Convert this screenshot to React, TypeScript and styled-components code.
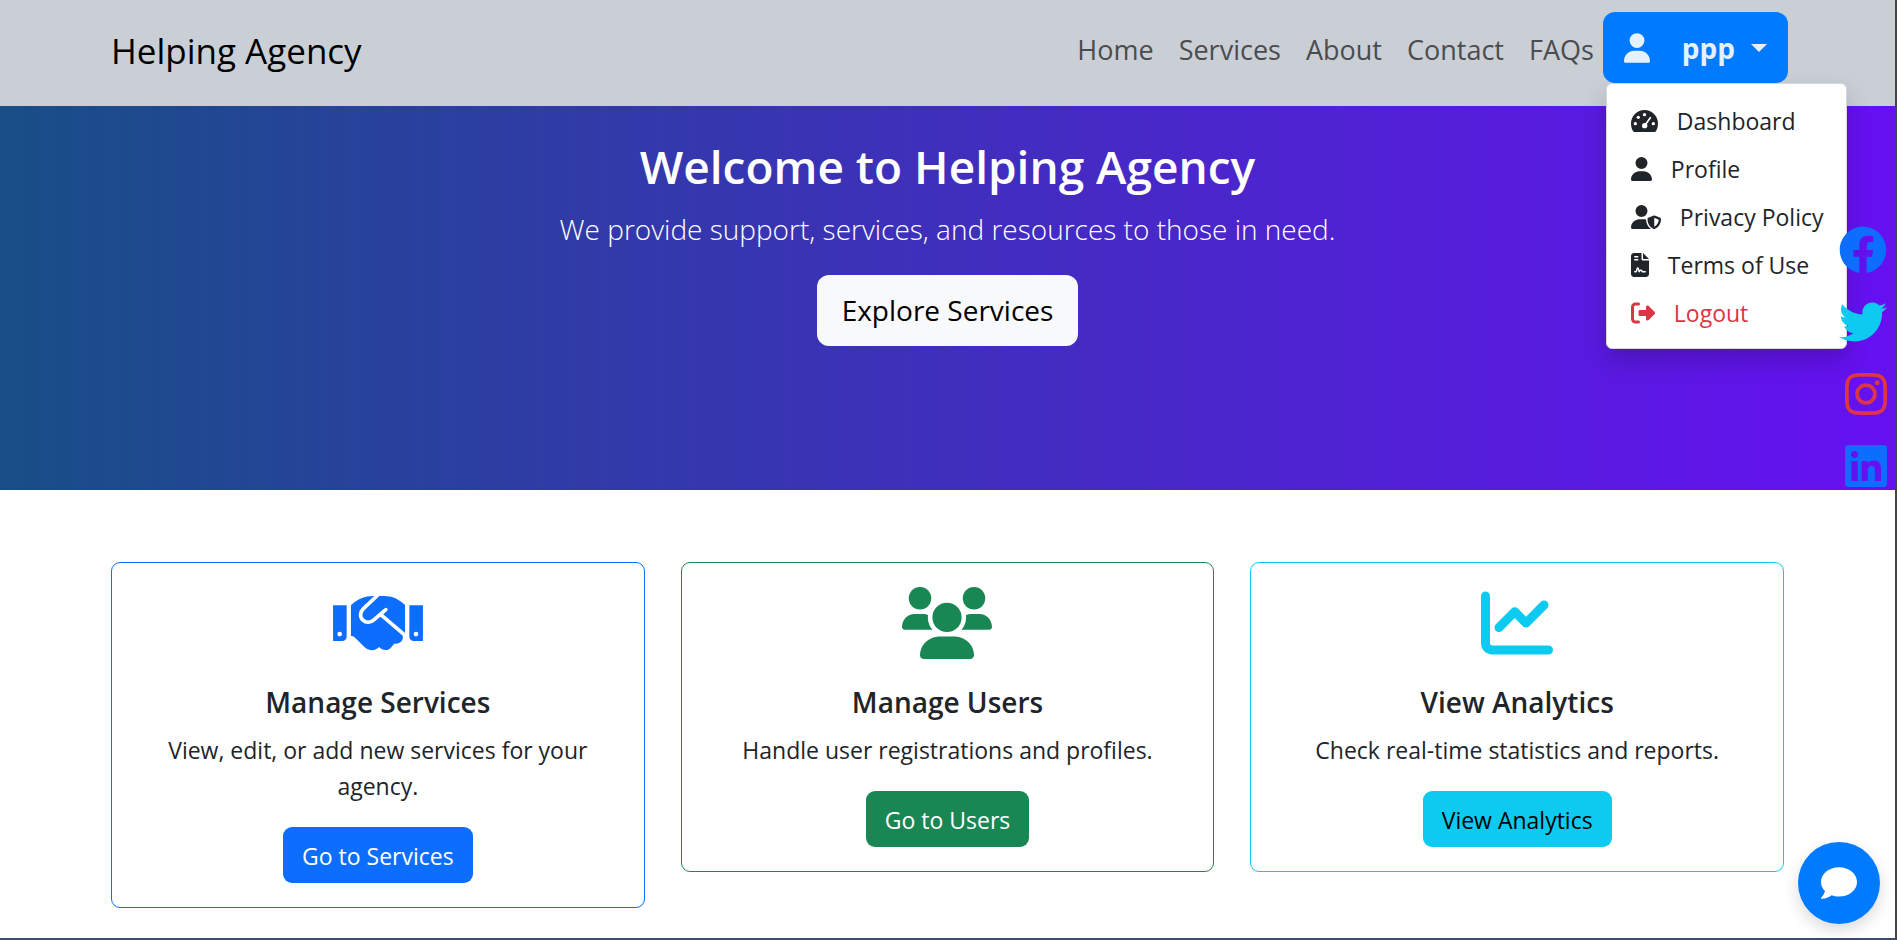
import React from "react";
import styled, { createGlobalStyle } from "styled-components";
import { FaComment, FaFacebook, FaTwitter, FaInstagram, FaLinkedin } from "react-icons/fa";
import {
  FaChartLine,
  FaFileContract,
  FaRightFromBracket,
  FaUser,
  FaUserShield,
} from "react-icons/fa6";

const GlobalStyle = createGlobalStyle`
  *, *::before, *::after { box-sizing: border-box; }
  body {
    margin: 0;
    background: #fff;
    color: #212529;
    font-family: "Open Sans", "Noto Sans", sans-serif;
    font-size: 23px;
    line-height: 36px;
  }
  h1, h2, p, ul { margin: 0; padding: 0; }
  ul { list-style: none; }
  a { color: inherit; text-decoration: none; }
  button { font-family: inherit; cursor: pointer; }
  svg { display: block; flex: none; }
`;

const Page = styled.div`
  position: relative;
  border-right: 2px solid #454545;
  border-bottom: 2px solid #34506f;
`;

const Container = styled.div`
  max-width: 1709px;
  margin: 0 auto;
  padding: 0 18px;
`;

const Header = styled.header`
  background: #cacfd6;
  padding: 12px 0 23px;
`;

const Bar = styled(Container)`
  display: flex;
  align-items: center;
  justify-content: space-between;
  padding-right: 14px;
`;

const Brand = styled.a`
  padding-top: 6px;
  font-size: 35px;
  line-height: 54px;
  color: #000;
`;

const Nav = styled.nav`
  display: flex;
  align-items: center;
`;

const NavList = styled.ul`
  display: flex;
`;

const NavLink = styled.a`
  display: block;
  padding: 3px 9px 0 16px;
  font-size: 27px;
  line-height: 45px;
  color: #4a4c4f;
`;

const Account = styled.div`
  position: relative;
`;

const AccountButton = styled.button`
  display: flex;
  align-items: center;
  height: 71px;
  padding: 0 21px;
  border: 0;
  border-radius: 12px;
  background: #007bff;
  color: #e6f1ff;
  font-size: 28px;
  font-weight: 700;
`;

const AccountName = styled.span`
  margin: 0 16px 0 32px;
`;

const Caret = styled.span`
  border: 8px solid transparent;
  border-top-color: currentColor;
  border-bottom: 0;
`;

const Menu = styled.ul`
  && {
    padding: 12px 0;
  }
  position: absolute;
  z-index: 2;
  top: 71px;
  left: 3px;
  border: 1px solid #d4d7dc;
  border-radius: 6px;
  background: #fff;
  box-shadow: 0 12px 24px rgba(0, 0, 0, 0.18);
`;

const MenuLink = styled.a<{ $danger?: boolean }>`
  display: flex;
  align-items: center;
  gap: 19px;
  padding: 7px 22px 5px 24px;
  white-space: nowrap;
  color: ${(p) => (p.$danger ? "#dc3545" : "#212529")};
`;

const Hero = styled.section`
  min-height: 384px;
  padding: 31px 18px 48px;
  background: linear-gradient(to right, #184e86, #6610f2);
  color: #fff;
  text-align: center;
`;

const HeroTitle = styled.h1`
  font-size: 46px;
  line-height: 58px;
  font-weight: 600;
`;

const HeroText = styled.p`
  margin: 11px 0 22px;
  font-size: 28px;
  line-height: 47px;
  font-weight: 300;
`;

const HeroLink = styled.a`
  display: inline-block;
  padding: 13px 25px;
  border-radius: 12px;
  background: #f8f9fa;
  color: #000;
  font-size: 28px;
  line-height: 45px;
`;

const Cards = styled(Container)`
  display: grid;
  grid-template-columns: repeat(3, 1fr);
  align-items: start;
  gap: 36px;
  padding-top: 72px;
  padding-bottom: 30px;
`;

const Card = styled.article<{ $color: string }>`
  display: flex;
  flex-direction: column;
  align-items: center;
  padding: 24px;
  border: 1px solid ${(p) => p.$color};
  border-radius: 9px;
  text-align: center;

  > svg { color: ${(p) => p.$color}; }
`;

const CardTitle = styled.h2`
  margin: 25px 0 12px;
  font-size: 28px;
  line-height: 36px;
  font-weight: 600;
`;

const CardText = styled.p`
  padding: 0 24px;
`;

const CardLink = styled.a<{ $bg: string; $fg: string }>`
  margin-top: 23px;
  padding: 11px 19px 9px;
  border-radius: 9px;
  background: ${(p) => p.$bg};
  color: ${(p) => p.$fg};
`;

const Social = styled.aside`
  position: absolute;
  z-index: 3;
  top: 226px;
  right: 8px;
  display: flex;
  flex-direction: column;
  align-items: flex-end;
  gap: 24px;
`;

const SocialLink = styled.a<{ $color: string }>`
  color: ${(p) => p.$color};
`;

const ChatButton = styled.button`
  position: fixed;
  right: 17px;
  bottom: 16px;
  display: grid;
  place-items: center;
  width: 82px;
  height: 82px;
  border: 0;
  border-radius: 50%;
  background: #007bff;
  color: #fff;
  box-shadow: 0 6px 15px rgba(0, 0, 0, 0.15);
`;

type IconProps = { style?: React.CSSProperties };

const GaugeIcon = ({ style }: IconProps) => (
  <svg viewBox="0 0 81 66" style={style} aria-hidden="true">
    <path
      fill="currentColor"
      d="M40.5 0A40.5 40.5 0 0 0 0 40.5c0 8 2 15 5 21Q7 66 11 66h59q4 0 6-4.500c3-6 5-13 5-21A40.500 40.500 0 0 0 40.500 0z"
    />
    <g fill="#fff">
      <circle cx="13" cy="41" r="5" />
      <circle cx="22" cy="22" r="5" />
      <circle cx="40.500" cy="14" r="5" />
      <circle cx="67" cy="41" r="5" />
      <circle cx="41" cy="47" r="8" />
    </g>
    <path d="M43 44L58 23" stroke="#fff" strokeWidth="5" strokeLinecap="round" />
  </svg>
);

const HandshakeIcon = ({ style }: IconProps) => (
  <svg viewBox="37 20 271 217" style={style} aria-hidden="true">
    <g fill="currentColor">
      <path d="M37 75H78V170a13 13 0 0 1-13 13H37z" />
      <path d="M308 75H267V170a13 13 0 0 0 13 13H308z" />
      <path d="M91 75C110 56 134 47 157 47H190C216 47 236 57 254 74V160L247 165C250 181 240 194 222 190L212 202C204 212 186 213 176 201C166 213 146 213 134 203L101 171Q98 168 91 168z" />
    </g>
    <g fill="none" stroke="#fff" strokeWidth="11" strokeLinecap="round" strokeLinejoin="round">
      <path d="M172 44L128 86C118 96 117 111 127 120C137 129 150 128 160 119L196 88" />
      <path d="M181 103L256 167" />
    </g>
    <circle cx="57" cy="162" r="7" fill="#fff" />
    <circle cx="287" cy="162" r="7" fill="#fff" />
  </svg>
);

const UsersIcon = ({ style }: IconProps) => (
  <svg viewBox="0 0 640 512" fill="currentColor" style={style} aria-hidden="true">
    <circle cx="320" cy="216" r="104" />
    <circle cx="128" cy="80" r="80" />
    <circle cx="512" cy="80" r="80" />
    <path d="M369.900 352H270.100C191.600 352 128 411.700 128 485.300C128 500.100 140.700 512 156.400 512h327.200C499.300 512 512 500.100 512 485.300C512 411.700 448.400 352 369.900 352z" />
    <path d="M183.900 216c0-5.400 1-10.600 1.600-15.900C174.600 194.100 162.600 192 149.900 192H88.100C39.400 192 0 233.800 0 285.300C0 295.600 7.900 304 17.600 304h199.500C196.700 280.200 183.900 249.700 183.900 216z" />
    <path d="M551.900 192h-61.800c-12.800 0-24.900 3-35.900 8.200C454.800 205.500 455.800 210.600 455.800 216c0 33.700-12.800 64.200-33.200 88h199.700C632.100 304 640 295.600 640 285.300C640 233.800 600.600 192 551.900 192z" />
  </svg>
);

const links = ["Home", "Services", "About", "Contact", "FAQs"];

const menu = [
  { label: "Dashboard", Icon: GaugeIcon, width: 27 },
  { label: "Profile", Icon: FaUser, width: 21 },
  { label: "Privacy Policy", Icon: FaUserShield, width: 30 },
  { label: "Terms of Use", Icon: FaFileContract, width: 18 },
  { label: "Logout", Icon: FaRightFromBracket, width: 24, danger: true },
];

const cards = [
  {
    title: "Manage Services",
    text: "View, edit, or add new services for your agency.",
    action: "Go to Services",
    Icon: HandshakeIcon,
    width: 90,
    color: "#0d6efd",
    fg: "#fff",
  },
  {
    title: "Manage Users",
    text: "Handle user registrations and profiles.",
    action: "Go to Users",
    Icon: UsersIcon,
    width: 90,
    color: "#198754",
    fg: "#fff",
  },
  {
    title: "View Analytics",
    text: "Check real-time statistics and reports.",
    action: "View Analytics",
    Icon: FaChartLine,
    width: 72,
    color: "#0dcaf0",
    fg: "#000",
  },
];

const social = [
  { label: "Facebook", Icon: FaFacebook, width: 48, color: "#0d6efd" },
  { label: "Twitter", Icon: FaTwitter, width: 48, color: "#0dcaf0" },
  { label: "Instagram", Icon: FaInstagram, width: 42, color: "#dc3545" },
  { label: "LinkedIn", Icon: FaLinkedin, width: 42, color: "#0d6efd" },
];

export default function App() {
  return (
    <Page>
      <GlobalStyle />
      <Header>
        <Bar>
          <Brand href="#">Helping Agency</Brand>
          <Nav>
            <NavList>
              {links.map((label) => (
                <li key={label}>
                  <NavLink href="#">{label}</NavLink>
                </li>
              ))}
            </NavList>
            <Account>
              <AccountButton type="button" aria-expanded="true">
                <FaUser style={{ width: 26, height: 30 }} />
                <AccountName>ppp</AccountName>
                <Caret />
              </AccountButton>
              <Menu>
                {menu.map(({ label, Icon, width, danger }) => (
                  <li key={label}>
                    <MenuLink href="#" $danger={danger}>
                      <Icon style={{ width, height: 24 }} />
                      {label}
                    </MenuLink>
                  </li>
                ))}
              </Menu>
            </Account>
          </Nav>
        </Bar>
      </Header>
      <Hero>
        <HeroTitle>Welcome to Helping Agency</HeroTitle>
        <HeroText>We provide support, services, and resources to those in need.</HeroText>
        <HeroLink href="#services">Explore Services</HeroLink>
      </Hero>
      <Cards id="services">
        {cards.map(({ title, text, action, Icon, width, color, fg }) => (
          <Card key={title} $color={color}>
            <Icon style={{ width, height: 72 }} />
            <CardTitle>{title}</CardTitle>
            <CardText>{text}</CardText>
            <CardLink href="#" $bg={color} $fg={fg}>
              {action}
            </CardLink>
          </Card>
        ))}
      </Cards>
      <Social>
        {social.map(({ label, Icon, width, color }) => (
          <SocialLink key={label} href="#" aria-label={label} $color={color}>
            <Icon style={{ width, height: 48 }} />
          </SocialLink>
        ))}
      </Social>
      <ChatButton type="button" aria-label="Open chat">
        <FaComment size={36} />
      </ChatButton>
    </Page>
  );
}
